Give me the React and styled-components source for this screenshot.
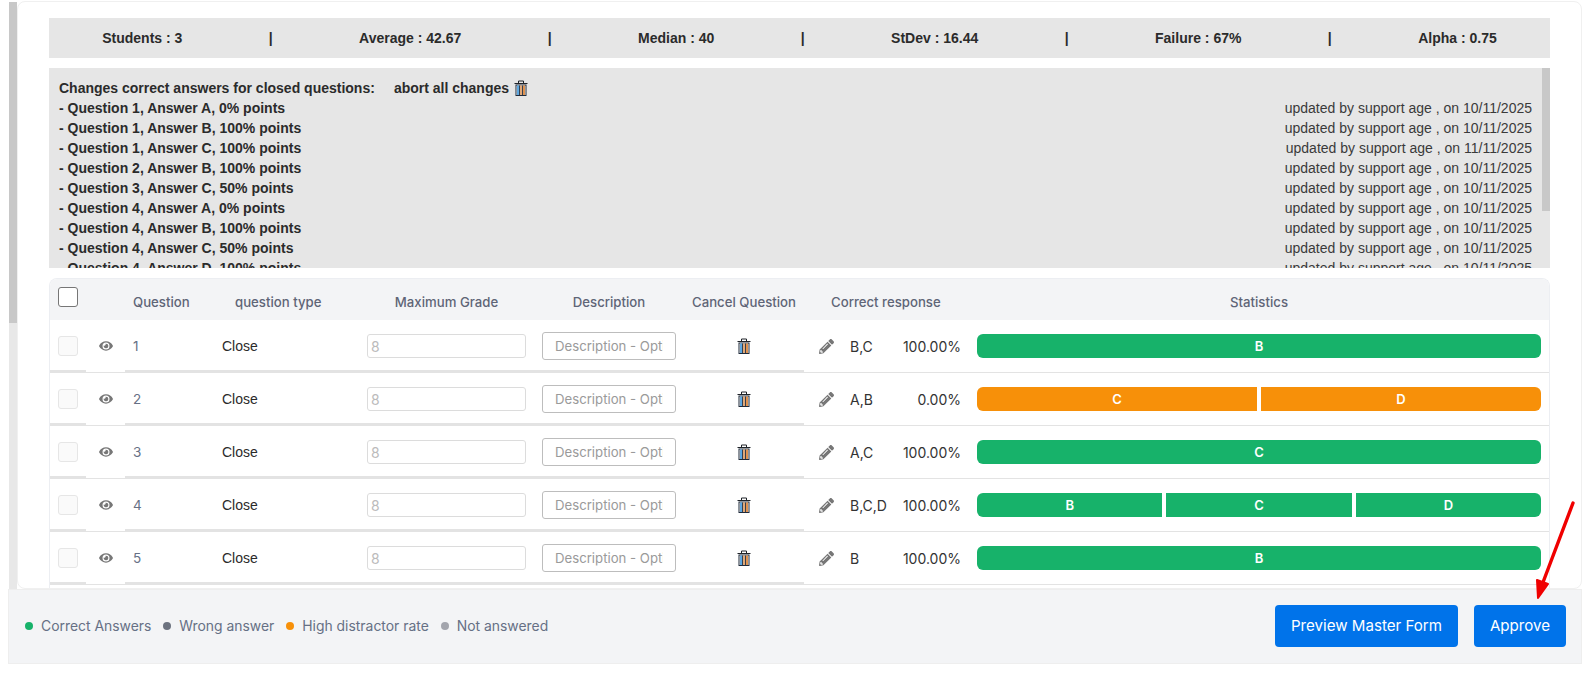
import React from 'react';
import styled, { createGlobalStyle } from 'styled-components';
import { FaEye, FaPencilAlt } from 'react-icons/fa';

const Global = createGlobalStyle`
  html, body { margin: 0; padding: 0; background: #fff; overflow: hidden; }
  * { box-sizing: border-box; }
`;

const GRID = '36px 39px 92px 142px 175px 150px 120px 173px 1fr';
const SANS = '"Liberation Sans", Arial, sans-serif';
const UI = 'Inter, "Noto Sans", sans-serif';

const Page = styled.div`
  position: relative;
  width: 1587px;
  height: 685px;
  padding-top: 1px;
  background: #fff;
  overflow: hidden;
  display: flex;
  flex-direction: column;
`;
const TopArea = styled.div`
  display: flex;
  height: 588px;
  margin-left: 9px;
  margin-right: 5px;
`;
const Rail = styled.div`
  width: 8px;
  flex: none;
  background: #e8e8e8;
  margin-top: 1px;
`;
const RailThumb = styled.div`
  height: 321px;
  background: #c8c8c8;
`;
const Card = styled.main`
  flex: 1;
  min-width: 0;
  display: flex;
  flex-direction: column;
  gap: 10px;
  padding: 16px 31px 0 31px;
  border: 1px solid #f0f0f0;
  border-radius: 8px;
  overflow: hidden;
`;
const StatsBar = styled.div`
  flex: none;
  height: 40px;
  padding: 0 10px;
  background: #e6e6e6;
  display: flex;
  justify-content: space-around;
  align-items: center;
  font: bold 14px/20px ${SANS};
  color: #2b2b2b;
`;
const ChangesWrap = styled.section`
  position: relative;
  flex: none;
  height: 200px;
  background: #e6e6e6;
  overflow: hidden;
`;
const ChangesThumb = styled.div`
  position: absolute;
  top: 0;
  right: 0;
  width: 8px;
  height: 143px;
  background: #c8c8c8;
`;
const Changes = styled.div`
  padding: 10px 18px 0 10px;
  font: 14px/20px ${SANS};
  color: #3a3a3a;
`;
const ChangesHead = styled.div`
  font-weight: bold;
  color: #2b2b2b;
  display: flex;
  align-items: center;
`;
const Abort = styled.span`
  margin-left: 19px;
  margin-right: 5px;
`;
const ChangeRow = styled.div`
  display: flex;
  justify-content: space-between;
`;
const ChangeName = styled.span`
  font-weight: bold;
  color: #2b2b2b;
`;
const Table = styled.section`
  flex: 1;
  min-height: 0;
  border: 1px solid #eceef2;
  border-bottom: 0;
  border-radius: 8px 8px 0 0;
  overflow: hidden;
`;
const HeadRow = styled.div`
  display: grid;
  grid-template-columns: ${GRID};
  height: 41px;
  background: #f3f4f6;
  font: 500 13.2px/46px ${UI};
  color: #5f6577;
`;
const HeadCell = styled.div`
  text-align: ${p => p.$align || 'center'};
  padding-left: ${p => p.$pad || 0}px;
  padding-right: ${p => p.$padRight || 0}px;
  white-space: nowrap;
`;
const HeadCheck = styled.div`
  padding: 8px 0 0 8px;
`;
const BigBox = styled.div`
  width: 20px;
  height: 20px;
  background: #fff;
  border: 1px solid #767676;
  border-radius: 3px;
`;
const Row = styled.div`
  display: grid;
  grid-template-columns: ${GRID};
  height: 53px;
  border-bottom: 1px solid #e3e3e3;
  align-items: stretch;
`;
const Cell = styled.div`
  display: flex;
  align-items: center;
  justify-content: ${p => p.$justify || 'flex-start'};
  padding: 2px ${p => p.$right || 0}px 0 ${p => p.$left || 0}px;
  border-bottom: 2px solid ${p => (p.$plain ? 'transparent' : '#e3e3e3')};
  font: 14px ${SANS};
  color: #2b2b2b;
`;
const SmallBox = styled.div`
  width: 20px;
  height: 20px;
  border: 1px solid #e6e6e6;
  border-radius: 3px;
  background: #fafafa;
`;
const Num = styled.span`
  color: #667085;
  font: 13.5px ${UI};
`;
const GradeInput = styled.input`
  width: 159px;
  height: 24px;
  padding: 0 3px;
  border: 1px solid #dcdcdc;
  border-radius: 3px;
  background: #fff;
  font: 14px ${UI};
  &::placeholder { color: #bbb; opacity: 1; }
`;
const DescInput = styled.input`
  width: 134px;
  height: 28px;
  padding: 0 12px;
  border: 1px solid #bdbdbd;
  border-radius: 3px;
  background: #fff;
  font: 13.2px ${UI};
  &::placeholder { color: #9a9a9a; opacity: 1; }
`;
const Pencil = styled(FaPencilAlt)`
  color: #777;
  width: 15px;
  height: 15px;
  margin-left: 15px;
  flex: none;
`;
const Eye = styled(FaEye)`
  color: #777;
  width: 14px;
  height: 14px;
`;
const Answers = styled.span`
  margin-left: 16px;
  font: 14px ${UI};
  color: #333;
`;
const Pct = styled.span`
  margin-left: auto;
  margin-right: 16px;
  font: 14px ${UI};
  color: #333;
`;
const Bars = styled.div`
  display: flex;
  gap: 4px;
  flex: 1;
  height: 24px;
`;
const Seg = styled.div`
  flex: 1;
  display: flex;
  align-items: center;
  justify-content: center;
  background: ${p => (p.$tone === 'orange' ? '#f79009' : '#17b26a')};
  color: #fff;
  font: 600 13px ${UI};
  &:first-child { border-radius: 6px 0 0 6px; }
  &:last-child { border-radius: 0 6px 6px 0; }
  &:only-child { border-radius: 6px; }
`;
const Footer = styled.footer`
  flex: none;
  height: 75px;
  margin: 0 5px 0 8px;
  padding: 0 15px 2px 16px;
  background: #f3f4f6;
  border: 1px solid #eeeeee;
  display: flex;
  align-items: center;
  justify-content: space-between;
`;
const Legend = styled.div`
  display: flex;
  gap: 12px;
  font: 13.9px ${UI};
  color: #667085;
`;
const LegendItem = styled.div`
  display: flex;
  align-items: center;
  gap: 8px;
`;
const Dot = styled.span`
  width: 8px;
  height: 8px;
  border-radius: 50%;
  background: ${p => p.$color};
`;
const Actions = styled.div`
  display: flex;
  gap: 16px;
`;
const Button = styled.button`
  height: 42px;
  padding: 0 16px;
  border: 0;
  border-radius: 4px;
  background: #0073ea;
  color: #fff;
  font: 400 15.1px ${UI};
`;
const Arrow = styled.svg`
  position: absolute;
  left: 1530px;
  top: 495px;
  pointer-events: none;
`;

const Trash = () => (
  <svg width="14" height="16" viewBox="0 0 14 16" style={{ flex: 'none' }}>
    <path d="M0.5 3.5h13M4.5 3V1h5v2" fill="none" stroke="#1f2328" strokeWidth="1" />
    <rect x="2" y="5" width="10" height="10.5" fill="#fff" stroke="#1f2a3a" strokeWidth="1" />
    <rect x="3" y="5.5" width="2" height="9.5" fill="#5fa8e0" />
    <rect x="5" y="5.5" width="1" height="9.5" fill="#36404e" />
    <rect x="6" y="5.5" width="2" height="9.5" fill="#e0a878" />
    <rect x="8" y="5.5" width="1" height="9.5" fill="#36404e" />
    <rect x="9" y="5.5" width="2" height="9.5" fill="#e0924f" />
  </svg>
);

const changes = [
  ['- Question 1, Answer A, 0% points', '10/11/2025'],
  ['- Question 1, Answer B, 100% points', '10/11/2025'],
  ['- Question 1, Answer C, 100% points', '11/11/2025'],
  ['- Question 2, Answer B, 100% points', '10/11/2025'],
  ['- Question 3, Answer C, 50% points', '10/11/2025'],
  ['- Question 4, Answer A, 0% points', '10/11/2025'],
  ['- Question 4, Answer B, 100% points', '10/11/2025'],
  ['- Question 4, Answer C, 50% points', '10/11/2025'],
  ['- Question 4, Answer D, 100% points', '10/11/2025'],
];
const stats = ['Students : 3', 'Average : 42.67', 'Median : 40', 'StDev : 16.44', 'Failure : 67%', 'Alpha : 0.75'];
const rows = [
  { n: 1, a: 'B,C', p: '100.00%', segs: ['B'], tone: 'green' },
  { n: 2, a: 'A,B', p: '0.00%', segs: ['C', 'D'], tone: 'orange' },
  { n: 3, a: 'A,C', p: '100.00%', segs: ['C'], tone: 'green' },
  { n: 4, a: 'B,C,D', p: '100.00%', segs: ['B', 'C', 'D'], tone: 'green' },
  { n: 5, a: 'B', p: '100.00%', segs: ['B'], tone: 'green' },
];
const legend = [
  ['#17b26a', 'Correct Answers'],
  ['#6c727f', 'Wrong answer'],
  ['#f79009', 'High distractor rate'],
  ['#a3a5ad', 'Not answered'],
];

export default function App() {
  return (
    <Page>
      <Global />
      <TopArea>
        <Rail><RailThumb /></Rail>
        <Card>
          <StatsBar>
            {stats.map((s, i) => (
              <React.Fragment key={s}>
                {i > 0 && <span>|</span>}
                <span>{s}</span>
              </React.Fragment>
            ))}
          </StatsBar>
          <ChangesWrap>
            <Changes>
              <ChangesHead>
                <span>Changes correct answers for closed questions:</span>
                <Abort>abort all changes</Abort>
                <Trash />
              </ChangesHead>
              {changes.map(([name, date]) => (
                <ChangeRow key={name}>
                  <ChangeName>{name}</ChangeName>
                  <span>updated by support age , on {date}</span>
                </ChangeRow>
              ))}
            </Changes>
            <ChangesThumb />
          </ChangesWrap>
          <Table>
            <HeadRow>
              <HeadCheck><BigBox /></HeadCheck>
              <div />
              <HeadCell $align="left" $pad={8}>Question</HeadCell>
              <HeadCell $align="left" $pad={18}>question type</HeadCell>
              <HeadCell>Maximum Grade</HeadCell>
              <HeadCell>Description</HeadCell>
              <HeadCell>Cancel Question</HeadCell>
              <HeadCell $align="left" $pad={27}>Correct response</HeadCell>
              <HeadCell $padRight={8}>Statistics</HeadCell>
            </HeadRow>
            {rows.map(r => (
              <Row key={r.n}>
                <Cell $left={8}><SmallBox /></Cell>
                <Cell $plain $left={13}><Eye /></Cell>
                <Cell $left={8}><Num>{r.n}</Num></Cell>
                <Cell $left={5}>Close</Cell>
                <Cell $justify="center"><GradeInput placeholder="8" readOnly /></Cell>
                <Cell $justify="center"><DescInput placeholder="Description - Optional" readOnly /></Cell>
                <Cell $justify="center"><Trash /></Cell>
                <Cell $plain>
                  <Pencil />
                  <Answers>{r.a}</Answers>
                  <Pct>{r.p}</Pct>
                </Cell>
                <Cell $plain $right={8}>
                  <Bars>
                    {r.segs.map(s => <Seg key={s} $tone={r.tone}>{s}</Seg>)}
                  </Bars>
                </Cell>
              </Row>
            ))}
          </Table>
        </Card>
      </TopArea>
      <Footer>
        <Legend>
          {legend.map(([c, t]) => (
            <LegendItem key={t}><Dot $color={c} />{t}</LegendItem>
          ))}
        </Legend>
        <Actions>
          <Button>Preview Master Form</Button>
          <Button>Approve</Button>
        </Actions>
      </Footer>
      <Arrow width="50" height="110" viewBox="0 0 50 110">
        <path d="M43 8 L12 90" stroke="#f00000" strokeWidth="3.4" strokeLinecap="round" fill="none" />
        <polygon points="8,103 7,85 18,89" fill="#f00000" stroke="#f00000" strokeWidth="2" strokeLinejoin="round" />
      </Arrow>
    </Page>
  );
}
